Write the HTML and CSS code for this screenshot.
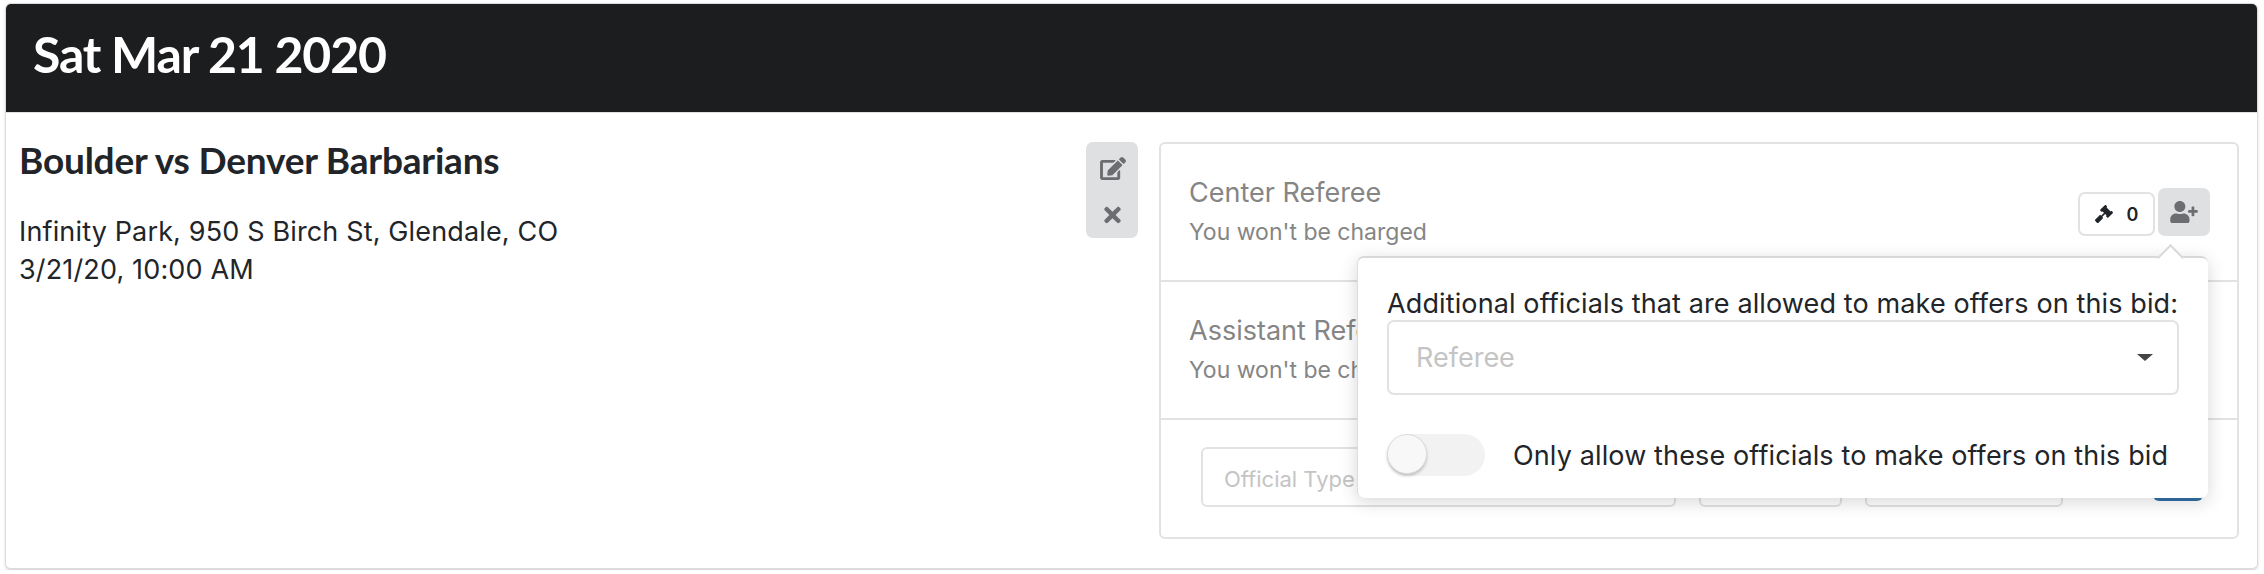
FILE: index.html
```html
<!DOCTYPE html>
<html>
    <head>
        <meta charset="UTF-8">
        <title>Sat Mar 21 2020</title>
        <link rel="stylesheet" href="styles.css">
    </head>
    <body>
        <div class="card">
            <div class="card-head">Sat Mar 21 2020</div>
            <div class="card-body">
                <div class="game">
                    <h2 class="game-title">Boulder vs Denver Barbarians</h2>
                    <div class="game-info">Infinity Park, 950 S Birch St, Glendale, CO<br>3/21/20, 10:00 AM</div>
                </div>
                <div class="game-actions">
                    <svg class="icon-edit" viewBox="0 0 576 512"><path d="M402.6 83.2l90.2 90.2c3.8 3.8 3.8 10 0 13.8L274.4 405.6l-92.8 10.3c-12.4 1.4-22.9-9.1-21.5-21.5l10.3-92.8L388.8 83.2c3.8-3.8 10-3.8 13.8 0zm162-22.9l-48.8-48.8c-15.2-15.2-39.9-15.2-55.2 0l-35.4 35.4c-3.8 3.8-3.8 10 0 13.8l90.2 90.2c3.8 3.8 10 3.8 13.8 0l35.4-35.4c15.2-15.3 15.2-40 0-55.2zM384 346.2V448H64V128h229.8c3.2 0 6.2-1.3 8.5-3.5l40-40c7.6-7.6 2.2-20.5-8.5-20.5H48C21.5 64 0 85.5 0 112v352c0 26.5 21.5 48 48 48h352c26.5 0 48-21.5 48-48V306.2c0-10.7-12.9-16-20.5-8.5l-40 40c-2.2 2.3-3.5 5.3-3.5 8.5z"/></svg>
                    <svg class="icon-close" viewBox="0 0 352 512"><path d="M242.72 256l100.07-100.07c12.28-12.28 12.28-32.19 0-44.48l-22.24-22.24c-12.28-12.28-32.19-12.28-44.48 0L176 189.28 75.93 89.21c-12.28-12.28-32.19-12.28-44.48 0L9.21 111.45c-12.28 12.28-12.28 32.19 0 44.48L109.28 256 9.21 356.07c-12.28 12.28-12.28 32.19 0 44.48l22.24 22.24c12.28 12.28 32.2 12.28 44.48 0L176 322.72l100.07 100.07c12.28 12.28 32.2 12.28 44.48 0l22.24-22.24c12.28-12.28 12.28-32.19 0-44.48L242.72 256z"/></svg>
                </div>
                <div class="bids">
                    <div class="bid-row">
                        <div class="bid-text">
                            <div class="bid-name">Center Referee</div>
                            <div class="bid-note">You won't be charged</div>
                        </div>
                        <div class="bid-buttons">
                            <div class="offers">
                                <svg class="icon-gavel" viewBox="0 0 512 512"><path d="M504.971 199.362l-22.627-22.627c-9.373-9.373-24.569-9.373-33.941 0l-5.657 5.657L329.608 69.255l5.657-5.657c9.373-9.373 9.373-24.569 0-33.941L312.638 7.029c-9.373-9.373-24.569-9.373-33.941 0L154.246 131.48c-9.373 9.373-9.373 24.569 0 33.941l22.627 22.627c9.373 9.373 24.569 9.373 33.941 0l5.657-5.657 39.598 39.598-81.04 81.04-5.657-5.657c-12.497-12.497-32.758-12.497-45.255 0L9.373 412.118c-12.497 12.497-12.497 32.758 0 45.255l45.255 45.255c12.497 12.497 32.758 12.497 45.255 0l114.745-114.745c12.497-12.497 12.497-32.758 0-45.255l-5.657-5.657 81.04-81.04 39.598 39.598-5.657 5.657c-9.373 9.373-9.373 24.569 0 33.941l22.627 22.627c9.373 9.373 24.569 9.373 33.941 0l124.451-124.451c9.372-9.372 9.372-24.568 0-33.941z"/></svg>
                                <span>0</span>
                            </div>
                            <div class="add-official">
                                <svg class="icon-user" viewBox="0 0 640 512"><path d="M624 208h-64v-64c0-8.8-7.2-16-16-16h-32c-8.8 0-16 7.2-16 16v64h-64c-8.8 0-16 7.2-16 16v32c0 8.8 7.2 16 16 16h64v64c0 8.8 7.2 16 16 16h32c8.8 0 16-7.2 16-16v-64h64c8.8 0 16-7.2 16-16v-32c0-8.8-7.2-16-16-16zm-400 48c70.7 0 128-57.3 128-128S294.7 0 224 0 96 57.3 96 128s57.3 128 128 128zm89.6 32h-16.7c-22.2 10.2-46.9 16-72.9 16s-50.6-5.8-72.9-16h-16.7C60.2 288 0 348.2 0 422.4V464c0 26.5 21.5 48 48 48h352c26.5 0 48-21.5 48-48v-41.6c0-74.2-60.2-134.4-134.4-134.4z"/></svg>
                            </div>
                        </div>
                    </div>
                    <div class="bid-row">
                        <div class="bid-text">
                            <div class="bid-name">Assistant Referee</div>
                            <div class="bid-note">You won't be charged</div>
                        </div>
                    </div>
                    <div class="bid-add">
                        <div class="field field-type">Official Type</div>
                        <div class="field field-count"></div>
                        <div class="field field-fee"></div>
                        <div class="add-btn"></div>
                    </div>

                    <div class="popover">
                        <div class="popover-arrow"></div>
                        <div class="popover-label">Additional officials that are allowed to make offers on this bid:</div>
                        <div class="select">
                            <span>Referee</span>
                            <div class="select-caret"></div>
                        </div>
                        <div class="toggle-row">
                            <div class="toggle"><div class="toggle-knob"></div></div>
                            <span class="toggle-text">Only allow these officials to make offers on this bid</span>
                        </div>
                    </div>
                </div>
            </div>
        </div>
    </body>
</html>
```

FILE: styles.css
```css
html{
    background-color: white;
}
body{
    margin: 0;
    padding: 3px 6px 0 5px;
    font-family: Inter, "Liberation Sans", sans-serif;
    color: #212529;
}
svg{
    display: block;
    fill: currentColor;
}
.card{
    height: 567px;
    box-sizing: border-box;
    border: 1px solid #dcdcdc;
    border-bottom-width: 2px;
    border-radius: 6px;
    box-shadow: 0 1px 3px rgba(0,0,0,0.14);
    overflow: hidden;
}
.card-head{
    height: 109px;
    box-sizing: border-box;
    padding: 0 27px;
    background-color: #1c1d1f;
    color: white;
    font-family: Lato, sans-serif;
    font-size: 50px;
    font-weight: 700;
    letter-spacing: -1.2px;
    line-height: 100px;
    border-bottom: 1px solid #e0e0e0;
}
.card-body{
    display: flex;
    padding: 29px 18px 0 13px;
}
.game{
    flex: 1;
}
.game-title{
    margin: 0;
    font-family: Lato, sans-serif;
    font-size: 37px;
    font-weight: 700;
    letter-spacing: -0.2px;
    line-height: 36px;
}
.game-info{
    margin-top: 35px;
    font-size: 27px;
    letter-spacing: 0.15px;
    line-height: 38px;
}
.game-actions{
    width: 52px;
    height: 96px;
    margin-right: 21px;
    background-color: #dfe0e2;
    border-radius: 7px;
    color: #6b6d70;
    display: flex;
    flex-direction: column;
    align-items: center;
    padding-top: 15px;
    box-sizing: border-box;
}
.icon-edit{
    width: 26px;
    height: 23px;
    margin-left: 2px;
}
.icon-close{
    width: 17px;
    height: 24px;
    margin-top: 23px;
}
.bids{
    position: relative;
    width: 1080px;
    height: 397px;
    box-sizing: border-box;
    border: 2px solid #e2e2e2;
    border-radius: 6px;
}
.bid-row{
    height: 138px;
    box-sizing: border-box;
    padding: 32px 27px 0 28px;
    border-bottom: 2px solid #e2e2e2;
    display: flex;
    justify-content: space-between;
}
.bid-name{
    font-size: 27px;
    line-height: 34px;
    color: #858585;
}
.bid-note{
    margin-top: 7px;
    font-size: 23px;
    line-height: 30px;
    color: #858585;
}
.bid-buttons{
    display: flex;
    align-items: flex-end;
    gap: 3px;
    height: 48px;
    margin-top: 12px;
}
.offers{
    width: 77px;
    height: 44px;
    box-sizing: border-box;
    border: 2px solid #e2e2e2;
    border-radius: 7px;
    display: flex;
    align-items: center;
    justify-content: center;
    gap: 14px;
    font-size: 18px;
    font-weight: 600;
}
.icon-gavel{
    width: 18px;
    height: 18px;
}
.add-official{
    width: 52px;
    height: 48px;
    background-color: #dfe0e2;
    border-radius: 7px;
    color: #6b6d70;
    display: flex;
    align-items: center;
    justify-content: center;
}
.icon-user{
    width: 28px;
    height: 22px;
}
.bid-add{
    display: flex;
    padding: 27px 34px 0 40px;
    gap: 23px;
}
.field{
    height: 60px;
    box-sizing: border-box;
    border: 2px solid #e2e2e2;
    border-radius: 6px;
    padding-left: 21px;
    font-size: 22px;
    line-height: 60px;
    color: #c4c4c4;
}
.field-type{
    width: 477px;
}
.field-count{
    width: 143px;
}
.field-fee{
    width: 199px;
}
.add-btn{
    width: 50px;
    height: 54px;
    margin-left: 67px;
    background-color: #3170a6;
    border-radius: 6px;
}
.popover{
    position: absolute;
    left: 196px;
    top: 112px;
    width: 851px;
    height: 242px;
    box-sizing: border-box;
    padding: 30px 29px 0 29px;
    background-color: white;
    border: 2px solid #dedede;
    border-top-color: #d8d8d8;
    border-width: 2px 0 0 1px;
    border-radius: 7px;
    box-shadow: 0 4px 18px rgba(0,0,0,0.16);
}
.popover-arrow{
    position: absolute;
    top: -10px;
    right: 28px;
    width: 19px;
    height: 19px;
    box-sizing: border-box;
    background-color: white;
    border-top: 2px solid #d8d8d8;
    border-left: 2px solid #d8d8d8;
    transform: rotate(45deg);
}
.popover-label{
    font-size: 27px;
    letter-spacing: 0.12px;
    line-height: 32px;
    white-space: nowrap;
}
.select{
    height: 75px;
    box-sizing: border-box;
    border: 2px solid #e2e2e2;
    border-radius: 7px;
    padding: 0 30px 0 27px;
    display: flex;
    align-items: center;
    justify-content: space-between;
    font-size: 27px;
    color: #c4c4c4;
}
.select-caret{
    width: 0;
    height: 0;
    border-left: 8px solid transparent;
    border-right: 8px solid transparent;
    border-top: 7px solid #444;
    margin-right: -6px;
}
.toggle-row{
    display: flex;
    align-items: center;
    gap: 28px;
    margin-top: 37px;
    font-size: 27px;
    line-height: 42px;
    white-space: nowrap;
}
.toggle{
    width: 98px;
    height: 42px;
    flex-shrink: 0;
    background-color: #f2f2f2;
    border-radius: 21px;
}
.toggle-knob{
    width: 40px;
    height: 40px;
    box-sizing: border-box;
    background-color: #f8f8f8;
    border: 1px solid #ddd;
    border-radius: 50%;
    box-shadow: 0 2px 3px rgba(0,0,0,0.2);
}
.toggle-text{
    padding-top: 3px;
    letter-spacing: 0.13px;
}
```
